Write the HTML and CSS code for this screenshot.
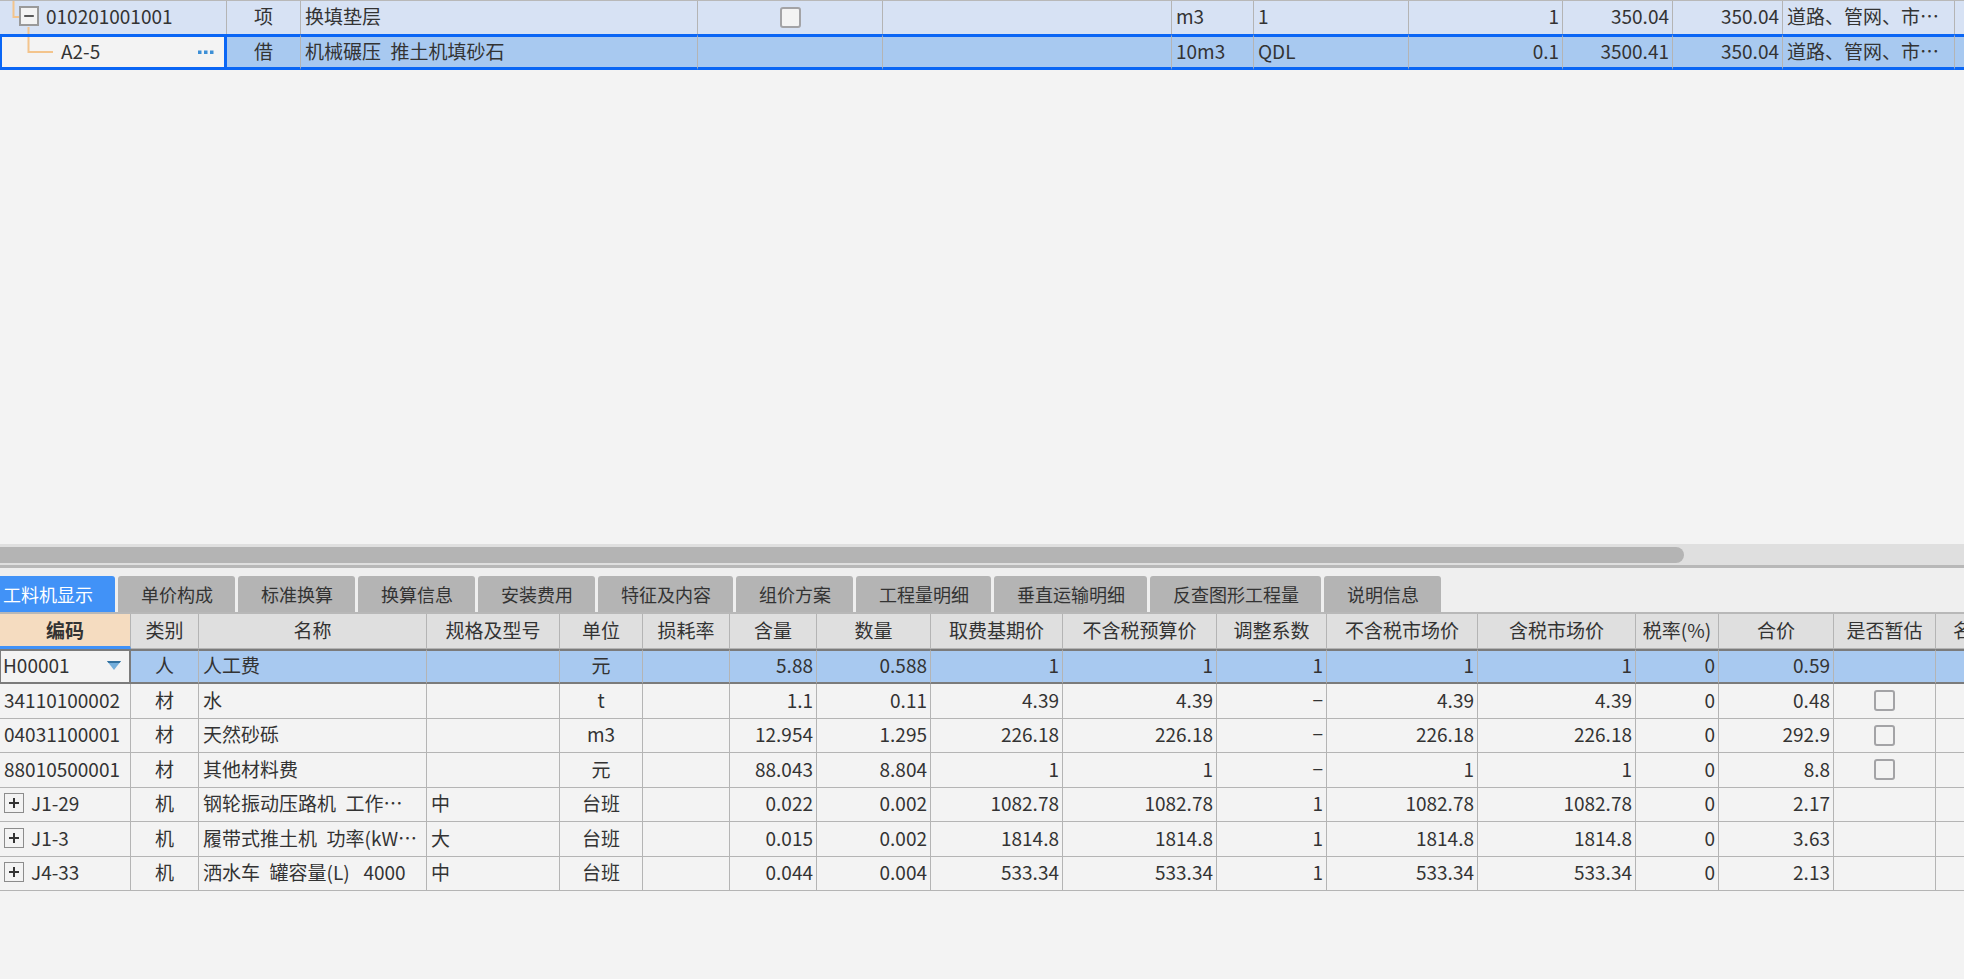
FILE: index.html
```
<!DOCTYPE html>
<html lang="zh-CN">
<head>
<meta charset="utf-8">
<title>工料机显示</title>
<link rel="stylesheet" href="styles.css">
</head>
<body>
<main class="app">
  <section class="upper">
    <table class="grid bill">
      <colgroup>
        <col class="b-code"><col class="b-kind"><col class="b-name"><col class="b-flag"><col class="b-spec"><col class="b-unit"><col class="b-expr"><col class="b-content"><col class="b-price"><col class="b-price"><col class="b-fee"><col class="b-rest">
      </colgroup>
      <tbody>
        <tr class="parent">
          <td class="tree"><svg class="branch" viewBox="0 0 64 34" aria-hidden="true"><path d="M13.500 0V16H20M28.500 26V34"/></svg><div class="node"><button class="toggle" type="button" aria-label="折叠"><svg viewBox="0 0 20 20"><path d="M4 10H16"/></svg></button><span>010201001001</span></div></td>
          <td class="mid">项</td><td>换填垫层</td><td class="mid"><input type="checkbox" class="tick" aria-label="选择"></td><td></td><td>m3</td><td>1</td><td class="num">1</td><td class="num">350.04</td><td class="num">350.04</td><td>道路、管网、市⋯</td><td></td>
        </tr>
        <tr class="chosen">
          <td class="editing"><div class="edit"><svg class="elbow" viewBox="0 0 56 30" aria-hidden="true"><path d="M26.500 0V15H51"/></svg><span class="code">A2-5</span><button class="more" type="button" aria-label="更多"><svg viewBox="0 0 16 4"><path d="M0 0.500h3.500v3.500H0zM6 0.500h3.500v3.500H6zM12 0.500h3.500v3.500H12z"/></svg></button></div></td>
          <td class="mid">借</td><td>机械碾压&ensp;推土机填砂石</td><td></td><td></td><td>10m3</td><td>QDL</td><td class="num">0.1</td><td class="num">3500.41</td><td class="num">350.04</td><td>道路、管网、市⋯</td><td></td>
        </tr>
      </tbody>
    </table>
  </section>

  <div class="scroll"><div class="thumb"></div></div>

  <nav class="tabs">
    <button class="tab active" type="button">工料机显示</button>
    <button class="tab" type="button">单价构成</button>
    <button class="tab" type="button">标准换算</button>
    <button class="tab" type="button">换算信息</button>
    <button class="tab" type="button">安装费用</button>
    <button class="tab" type="button">特征及内容</button>
    <button class="tab" type="button">组价方案</button>
    <button class="tab" type="button">工程量明细</button>
    <button class="tab" type="button">垂直运输明细</button>
    <button class="tab" type="button">反查图形工程量</button>
    <button class="tab" type="button">说明信息</button>
  </nav>

  <section class="lower">
    <table class="grid detail">
      <colgroup>
        <col class="d-code"><col class="d-kind"><col class="d-name"><col class="d-spec"><col class="d-unit"><col class="d-loss"><col class="d-loss"><col class="d-qty"><col class="d-base"><col class="d-budget"><col class="d-factor"><col class="d-market"><col class="d-taxed"><col class="d-rate"><col class="d-total"><col class="d-est"><col class="d-rest">
      </colgroup>
      <thead>
        <tr><th class="sorted">编码</th><th>类别</th><th>名称</th><th>规格及型号</th><th>单位</th><th>损耗率</th><th>含量</th><th>数量</th><th>取费基期价</th><th>不含税预算价</th><th>调整系数</th><th>不含税市场价</th><th>含税市场价</th><th>税率(%)</th><th>合价</th><th>是否暂估</th><th>名</th></tr>
      </thead>
      <tbody>
        <tr class="current"><td class="combo"><div class="pick"><span>H00001</span><button class="drop" type="button" aria-label="展开"><svg viewBox="0 0 14 9"><path d="M0 0H14L7 9z"/><path class="edge" d="M0 0H14L12.500 2H1.500z"/></svg></button></div></td><td class="mid">人</td><td>人工费</td><td></td><td class="mid">元</td><td></td><td class="num">5.88</td><td class="num">0.588</td><td class="num">1</td><td class="num">1</td><td class="num">1</td><td class="num">1</td><td class="num">1</td><td class="num">0</td><td class="num">0.59</td><td></td><td></td></tr>
        <tr><td>34110100002</td><td class="mid">材</td><td>水</td><td></td><td class="mid">t</td><td></td><td class="num">1.1</td><td class="num">0.11</td><td class="num">4.39</td><td class="num">4.39</td><td class="num">−</td><td class="num">4.39</td><td class="num">4.39</td><td class="num">0</td><td class="num">0.48</td><td class="mid"><input type="checkbox" class="tick" aria-label="是否暂估"></td><td></td></tr>
        <tr><td>04031100001</td><td class="mid">材</td><td>天然砂砾</td><td></td><td class="mid">m3</td><td></td><td class="num">12.954</td><td class="num">1.295</td><td class="num">226.18</td><td class="num">226.18</td><td class="num">−</td><td class="num">226.18</td><td class="num">226.18</td><td class="num">0</td><td class="num">292.9</td><td class="mid"><input type="checkbox" class="tick" aria-label="是否暂估"></td><td></td></tr>
        <tr><td>88010500001</td><td class="mid">材</td><td>其他材料费</td><td></td><td class="mid">元</td><td></td><td class="num">88.043</td><td class="num">8.804</td><td class="num">1</td><td class="num">1</td><td class="num">−</td><td class="num">1</td><td class="num">1</td><td class="num">0</td><td class="num">8.8</td><td class="mid"><input type="checkbox" class="tick" aria-label="是否暂估"></td><td></td></tr>
        <tr><td><div class="node"><button class="toggle" type="button" aria-label="展开"><svg viewBox="0 0 18 18"><path d="M4 9H14M9 4V14"/></svg></button><span>J1-29</span></div></td><td class="mid">机</td><td>钢轮振动压路机&ensp;工作⋯</td><td>中</td><td class="mid">台班</td><td></td><td class="num">0.022</td><td class="num">0.002</td><td class="num">1082.78</td><td class="num">1082.78</td><td class="num">1</td><td class="num">1082.78</td><td class="num">1082.78</td><td class="num">0</td><td class="num">2.17</td><td></td><td></td></tr>
        <tr><td><div class="node"><button class="toggle" type="button" aria-label="展开"><svg viewBox="0 0 18 18"><path d="M4 9H14M9 4V14"/></svg></button><span>J1-3</span></div></td><td class="mid">机</td><td>履带式推土机&ensp;功率(kW⋯</td><td>大</td><td class="mid">台班</td><td></td><td class="num">0.015</td><td class="num">0.002</td><td class="num">1814.8</td><td class="num">1814.8</td><td class="num">1</td><td class="num">1814.8</td><td class="num">1814.8</td><td class="num">0</td><td class="num">3.63</td><td></td><td></td></tr>
        <tr><td><div class="node"><button class="toggle" type="button" aria-label="展开"><svg viewBox="0 0 18 18"><path d="M4 9H14M9 4V14"/></svg></button><span>J4-33</span></div></td><td class="mid">机</td><td>洒水车&ensp;罐容量(L)&ensp;&nbsp;4000</td><td>中</td><td class="mid">台班</td><td></td><td class="num">0.044</td><td class="num">0.004</td><td class="num">533.34</td><td class="num">533.34</td><td class="num">1</td><td class="num">533.34</td><td class="num">533.34</td><td class="num">0</td><td class="num">2.13</td><td></td><td></td></tr>
      </tbody>
    </table>
  </section>
</main>
</body>
</html>
```

FILE: styles.css
```
* { box-sizing: border-box; }

body {
  margin: 0;
  background: #f3f3f3;
  color: #333;
  font-family: "Noto Sans CJK SC", sans-serif;
  font-size: 19px;
  line-height: 24px;
}

button { font: inherit; color: inherit; border: 0; padding: 0; background: none; }

.app { display: flex; flex-direction: column; height: 100vh; overflow: hidden; }
.upper { flex: 5 1 0; overflow: hidden; border-top: 1px solid #b8b8b8; }
.lower { flex: 0 0 365px; overflow: hidden; }

/* Shared grid */
.grid { table-layout: fixed; border-collapse: separate; border-spacing: 0; }
.grid td, .grid th {
  padding: 0 4px 3px;
  border-right: 1px solid #b4b4b4;
  border-bottom: 1px solid #b4b4b4;
  white-space: nowrap;
  overflow: hidden;
  text-align: left;
  vertical-align: middle;
  font-weight: 400;
}
.grid td.num { text-align: right; padding-right: 3px; }
.grid td.mid, .grid th { text-align: center; }

.tick {
  appearance: none;
  display: block;
  width: 21px;
  height: 21px;
  margin: 2px auto 0;
  border: 2px solid #a3a3a6;
  border-radius: 3px;
  background: #f3f3f3;
}

.node { display: flex; align-items: center; gap: 7px; }
.toggle {
  width: 20px;
  height: 20px;
  border: 1px solid #8c8c8c;
  background: #f3f3f3;
}
.toggle svg { display: block; width: 18px; height: 18px; fill: none; stroke: #333; stroke-width: 2; }

/* Bill table */
.bill { width: 1999px; }
.b-code { width: 227px; }
.b-kind { width: 74px; }
.b-name { width: 397px; }
.b-flag { width: 185px; }
.b-spec { width: 289px; }
.b-unit { width: 82px; }
.b-expr { width: 155px; }
.b-content { width: 154px; }
.b-price { width: 110px; }
.b-fee { width: 172px; }

.bill tr { height: 33px; }
.parent td { background: #d7e2f4; border-bottom: 0; }
.bill .tree { position: relative; padding-left: 19px; }
.branch { position: absolute; left: 0; top: 0; width: 64px; height: 34px; }
.branch path, .elbow path { fill: none; stroke: #f3c48c; stroke-width: 2; }
.tree .toggle { position: relative; border-width: 2px; border-color: #9a9a9a; }
.tree .toggle svg { width: 16px; height: 16px; }

.chosen td {
  height: 36px;
  background: #a8c9f0;
  border-top: 3px solid #0a66f5;
  border-bottom: 3px solid #0a66f5;
}
.chosen .editing { padding: 0; background: #f3f3f3; border-left: 2px solid #0a66f5; border-right: 3px solid #0a66f5; }
.edit { display: flex; align-items: center; height: 30px; padding-right: 10px; }
.elbow { width: 56px; height: 30px; }
.code { flex: 1; padding: 0 0 3px 3px; }
.more svg { display: block; width: 16px; height: 4px; fill: #3d8fd6; }

/* Scrollbar between the panes */
.scroll { flex: none; height: 24px; padding: 3px 0 2px; background: #dfdfdf; border-bottom: 3px solid #b8b8b8; }
.thumb { margin-right: 280px; height: 16px; background: #b4b4b4; border-radius: 0 8px 8px 0; }

/* Tabs */
.tabs {
  flex: none;
  display: flex;
  gap: 3px;
  padding-top: 8px;
  background: #efefef;
  border-bottom: 2px solid #b8b8b8;
}
.tab {
  flex: none;
  height: 36px;
  padding: 0 22px 0 23px;
  border-radius: 3px 3px 0 0;
  background: #b4b4b4;
  font-size: 18px;
  color: #333;
}
.tab.active { padding-left: 3px; background: #4192f7; color: #fff; border-radius: 0 3px 0 0; }

/* Detail table */
.detail { width: 1990px; }
.d-code { width: 131px; }
.d-kind { width: 68px; }
.d-name { width: 228px; }
.d-spec { width: 133px; }
.d-unit { width: 83px; }
.d-loss { width: 87px; }
.d-qty { width: 114px; }
.d-base { width: 132px; }
.d-budget { width: 154px; }
.d-factor { width: 110px; }
.d-market { width: 151px; }
.d-taxed { width: 158px; }
.d-rate { width: 83px; }
.d-total { width: 115px; }
.d-est { width: 102px; }
.d-rest { width: 54px; }

.grid.detail th { height: 35px; padding: 0 0 2px; background: #dfdfdf; }
.grid.detail th.sorted { padding: 0; background: #f5dcc0; border-bottom: 3px solid #4192f7; font-weight: 700; }
.detail td { height: 34px; }
.detail tr:nth-child(even) td { height: 35px; }
.detail .current td {
  height: 35px;
  background: #a8c9f0;
  border-top: 2px solid #7b7b7b;
  border-bottom: 2px solid #7b7b7b;
}
.detail .current .combo { padding: 0 0 3px 2px; background: #f3f3f3; border-left: 1px solid #7b7b7b; border-right: 2px solid #7b7b7b; }
.pick { display: flex; align-items: center; justify-content: space-between; padding-right: 8px; }
.drop svg { display: block; width: 14px; height: 9px; fill: #74aedb; }
.drop .edge { fill: #33719f; }
```
